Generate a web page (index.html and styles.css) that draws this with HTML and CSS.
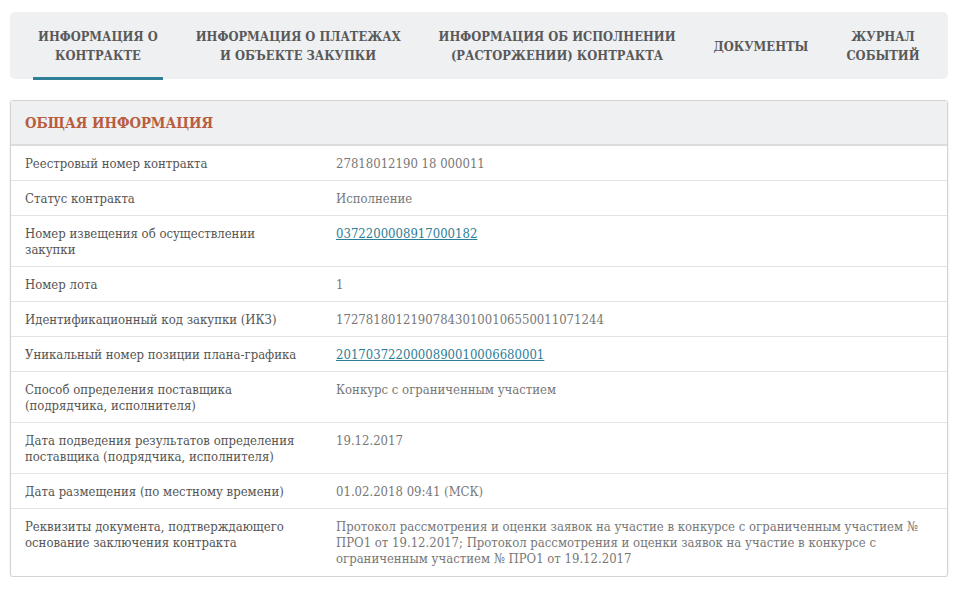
FILE: index.html
```html
<!DOCTYPE html>
<html lang="ru">
<head>
    <meta charset="UTF-8">
    <meta name="viewport" content="width=device-width, initial-scale=1.0">
    <title>Информация о контракте</title>
    <link rel="stylesheet" href="styles.css">
</head>
<body>
    <div class="page">
        <div class="tabs">
            <a class="tab active" href="#">Информация о<br>контракте</a>
            <a class="tab" href="#">Информация о платежах<br>и объекте закупки</a>
            <a class="tab" href="#">Информация об исполнении<br>(расторжении) контракта</a>
            <a class="tab" href="#">Документы</a>
            <a class="tab" href="#">Журнал<br>событий</a>
        </div>

        <div class="card">
            <div class="card-header">
                <h2>Общая информация</h2>
            </div>
            <table class="info-table">
                <tr>
                    <td class="label">Реестровый номер контракта</td>
                    <td class="value">27818012190 18 000011</td>
                </tr>
                <tr>
                    <td class="label">Статус контракта</td>
                    <td class="value">Исполнение</td>
                </tr>
                <tr>
                    <td class="label">Номер извещения об осуществлении закупки</td>
                    <td class="value"><a href="#">0372200008917000182</a></td>
                </tr>
                <tr>
                    <td class="label">Номер лота</td>
                    <td class="value">1</td>
                </tr>
                <tr>
                    <td class="label">Идентификационный код закупки (ИКЗ)</td>
                    <td class="value">172781801219078430100106550011071244</td>
                </tr>
                <tr>
                    <td class="label">Уникальный номер позиции плана-графика</td>
                    <td class="value"><a href="#">2017037220000890010006680001</a></td>
                </tr>
                <tr>
                    <td class="label">Способ определения поставщика (подрядчика, исполнителя)</td>
                    <td class="value">Конкурс с ограниченным участием</td>
                </tr>
                <tr>
                    <td class="label">Дата подведения результатов определения поставщика (подрядчика, исполнителя)</td>
                    <td class="value">19.12.2017</td>
                </tr>
                <tr>
                    <td class="label">Дата размещения (по местному времени)</td>
                    <td class="value">01.02.2018 09:41 (МСК)</td>
                </tr>
                <tr>
                    <td class="label">Реквизиты документа, подтверждающего основание заключения контракта</td>
                    <td class="value">Протокол рассмотрения и оценки заявок на участие в конкурсе с ограниченным участием № ПРО1 от 19.12.2017; Протокол рассмотрения и оценки заявок на участие в конкурсе с ограниченным участием № ПРО1 от 19.12.2017</td>
                </tr>
            </table>
        </div>
    </div>
</body>
</html>
```

FILE: styles.css
```css
body {
    margin: 0;
    font-family: "DejaVu Serif", "Liberation Serif", serif;
    font-stretch: condensed;
    background-color: #fff;
    color: #555;
}
.page {
    padding: 12px 13px 0 10px;
}
.tabs {
    display: flex;
    align-items: stretch;
    height: 67px;
    padding-left: 23px;
    gap: 28px;
    background-color: #eff0f2;
    border-radius: 5px;
}
.tab {
    flex: none;
    display: flex;
    align-items: center;
    justify-content: center;
    padding: 3px 5px 0;
    white-space: nowrap;
    text-align: center;
    text-transform: uppercase;
    text-decoration: none;
    font-size: 12.8px;
    font-weight: bold;
    line-height: 19px;
    color: #595959;
    border-bottom: 3px solid transparent;
    margin-bottom: -1px;
}
.tab.active {
    border-bottom-color: #2f7f99;
}
.card {
    margin-top: 21px;
    padding-bottom: 1px;
    border: 1px solid #d3d3d3;
    border-radius: 3px;
    box-shadow: 0 1px 2px rgba(0,0,0,0.12);
    overflow: hidden;
}
.card-header {
    background-color: #eff0f2;
    border-bottom: 2px solid #dcdcdc;
    height: 43px;
    display: flex;
    align-items: center;
    padding: 0 14px;
}
.card-header h2 {
    margin: 0;
    font-size: 14.7px;
    font-weight: bold;
    text-transform: uppercase;
    color: #b85d3d;
}
.info-table {
    width: 100%;
    border-collapse: collapse;
    font-size: 13px;
    line-height: 16px;
}
.info-table td {
    padding: 10px 3px 8px 14px;
    vertical-align: top;
    border-top: 1px solid #e3e3e3;
}
.info-table tr:first-child td {
    border-top: none;
}
.info-table td.label {
    width: 275px;
    padding-right: 22px;
    color: #555;
}
.info-table td.value {
    color: #777;
}
.info-table a {
    color: #2d7d96;
}
```
